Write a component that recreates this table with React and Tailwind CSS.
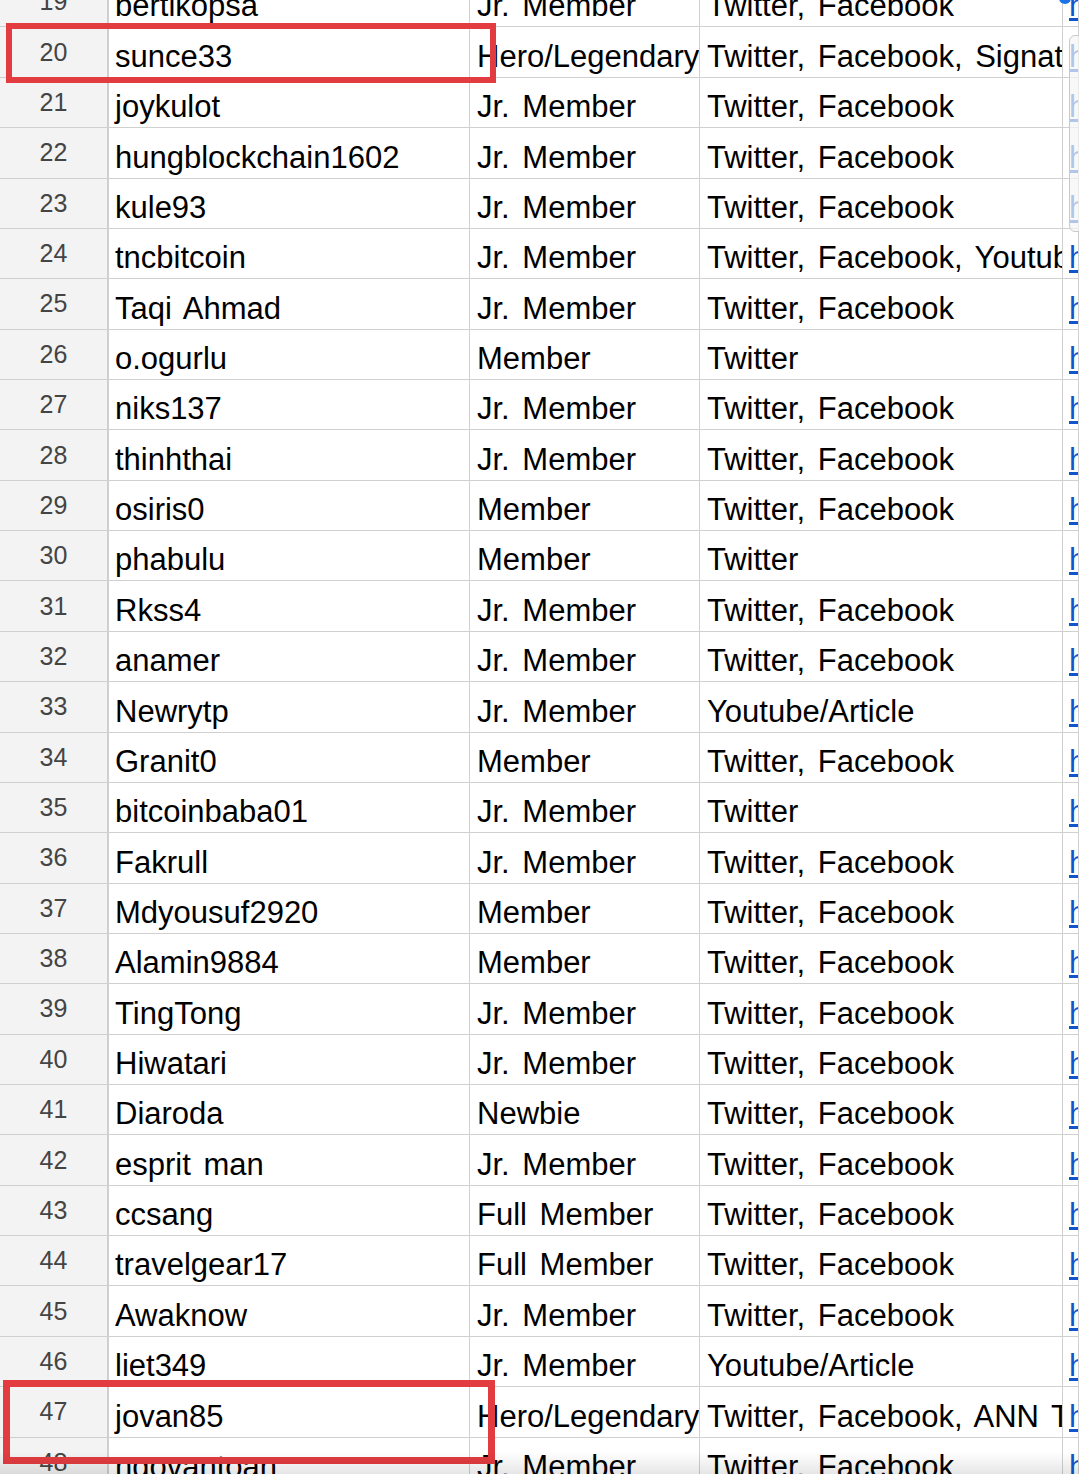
import React from 'react';

const ROWS = [
  [19, 'bertikopsa', 'Jr. Member', 'Twitter, Facebook'],
  [20, 'sunce33', 'Hero/Legendary', 'Twitter, Facebook, Signature'],
  [21, 'joykulot', 'Jr. Member', 'Twitter, Facebook'],
  [22, 'hungblockchain1602', 'Jr. Member', 'Twitter, Facebook'],
  [23, 'kule93', 'Jr. Member', 'Twitter, Facebook'],
  [24, 'tncbitcoin', 'Jr. Member', 'Twitter, Facebook, Youtube'],
  [25, 'Taqi Ahmad', 'Jr. Member', 'Twitter, Facebook'],
  [26, 'o.ogurlu', 'Member', 'Twitter'],
  [27, 'niks137', 'Jr. Member', 'Twitter, Facebook'],
  [28, 'thinhthai', 'Jr. Member', 'Twitter, Facebook'],
  [29, 'osiris0', 'Member', 'Twitter, Facebook'],
  [30, 'phabulu', 'Member', 'Twitter'],
  [31, 'Rkss4', 'Jr. Member', 'Twitter, Facebook'],
  [32, 'anamer', 'Jr. Member', 'Twitter, Facebook'],
  [33, 'Newrytp', 'Jr. Member', 'Youtube/Article'],
  [34, 'Granit0', 'Member', 'Twitter, Facebook'],
  [35, 'bitcoinbaba01', 'Jr. Member', 'Twitter'],
  [36, 'Fakrull', 'Jr. Member', 'Twitter, Facebook'],
  [37, 'Mdyousuf2920', 'Member', 'Twitter, Facebook'],
  [38, 'Alamin9884', 'Member', 'Twitter, Facebook'],
  [39, 'TingTong', 'Jr. Member', 'Twitter, Facebook'],
  [40, 'Hiwatari', 'Jr. Member', 'Twitter, Facebook'],
  [41, 'Diaroda', 'Newbie', 'Twitter, Facebook'],
  [42, 'esprit man', 'Jr. Member', 'Twitter, Facebook'],
  [43, 'ccsang', 'Full Member', 'Twitter, Facebook'],
  [44, 'travelgear17', 'Full Member', 'Twitter, Facebook'],
  [45, 'Awaknow', 'Jr. Member', 'Twitter, Facebook'],
  [46, 'liet349', 'Jr. Member', 'Youtube/Article'],
  [47, 'jovan85', 'Hero/Legendary', 'Twitter, Facebook, ANN Translation'],
  [48, 'ngovantoan', 'Jr. Member', 'Twitter, Facebook'],
];

const cell = 'h-full flex items-end pb-[5px] border-r border-b border-[#d0d0d0] overflow-hidden whitespace-nowrap';

function Row({ n, name, rank, platforms }) {
  return (
    <div className="grid grid-cols-[109px_361px_230px_363px_1fr] h-[50.36px]">
      <div className="h-full flex items-center justify-center bg-[#f3f3f3] border-r-2 border-b border-[#cfcfcf] text-[25px] text-[#444] [word-spacing:0px]">
        {n}
      </div>
      <div className={`${cell} pl-[6px]`}>{name}</div>
      <div className={`${cell} pl-[7px]`}>{rank}</div>
      <div className={`${cell} pl-[7px]`}>{platforms}</div>
      <div className={`${cell} pl-[6px] text-[#1155cc] underline`}>https://bitcointalk.org/index.php?topic=</div>
    </div>
  );
}

export default function App() {
  return (
    <div className="relative w-[1079px] h-[1474px] overflow-hidden bg-white font-['Liberation_Sans',Arial,sans-serif] text-[31px] leading-[31px] text-black [word-spacing:4px]">
      <div className="mt-[-22.9px]">
        {ROWS.map(([n, name, rank, platforms]) => (
          <Row key={n} n={n} name={name} rank={rank} platforms={platforms} />
        ))}
      </div>

      {/* scrollbar-ish overlay in the link column */}
      <div className="absolute left-[1069px] top-[35px] w-[20px] h-[197px] rounded-[6px] border border-[#c9c9c9] bg-[#f5f5f5]/70" />
      {/* selection handle */}
      <div className="absolute left-[1059px] top-[-8px] w-[12px] h-[12px] rounded-full bg-[#1a73e8]" />

      {/* red annotation boxes */}
      <div className="absolute left-[6px] top-[23px] w-[490px] h-[60px] border-[6px] border-[#e23c40]" />
      <div className="absolute left-[3px] top-[1380px] w-[492px] h-[84px] border-[7px] border-[#e23c40]" />

      {/* bottom fade */}
      <div className="absolute left-0 right-0 bottom-0 h-[22px] bg-gradient-to-b from-transparent to-black/10" />
    </div>
  );
}
